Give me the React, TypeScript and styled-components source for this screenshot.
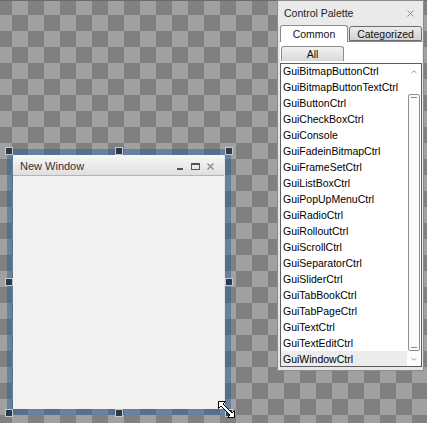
import React from "react";
import styled, { createGlobalStyle } from "styled-components";

const Global = createGlobalStyle`
  html, body { margin: 0; padding: 0; background: #808080; }
  body { font-family: "Liberation Sans", Arial, sans-serif; }
  * { box-sizing: border-box; }
`;

const Canvas = styled.div`
  position: relative;
  width: 427px;
  height: 423px;
  overflow: hidden;
  background: repeating-conic-gradient(#808080 0 25%, #a0a0a0 0 50%);
  background-size: 32px 32px;
  background-position: 12px -1px;
  box-shadow: inset 0 1px 0 #6a6a6a;
`;

/* ---------- selected window on the canvas ---------- */

const SelectionFrame = styled.div`
  position: absolute;
  left: 7px;
  top: 149px;
  width: 224px;
  height: 266px;
  padding: 6px;
  background: rgba(36, 92, 158, 0.45);
  display: flex;
`;

const Handle = styled.div<{ $x: string; $y: string }>`
  position: absolute;
  left: ${(p) => p.$x};
  top: ${(p) => p.$y};
  width: 8px;
  height: 8px;
  background: #2e3947;
  border: 1px solid #c3c9d0;
  z-index: 2;
`;

const Window = styled.div`
  flex: 1;
  display: flex;
  flex-direction: column;
  background: #f2f1ef;
  border-right: 1px solid #e4e4e4;
`;

const TitleBar = styled.div`
  height: 21px;
  flex: none;
  display: flex;
  align-items: center;
  padding: 0 10px 0 7px;
  background: linear-gradient(#f8f8f8, #dfdfdf);
  border-bottom: 1px solid #b4b4b4;
`;

const Title = styled.span`
  flex: 1;
  font-size: 11px;
  color: #333;
  padding-top: 1px;
`;

const TitleButtons = styled.div`
  display: flex;
  align-items: center;
  gap: 7px;
  padding-top: 2px;
`;

const Body = styled.div`
  flex: 1;
`;

const ResizeCursor = styled.svg`
  position: absolute;
  left: 217px;
  top: 400px;
  z-index: 3;
`;

/* ---------- control palette ---------- */

const Palette = styled.div`
  position: absolute;
  left: 277px;
  top: 0;
  width: 147px;
  height: 371px;
  border: 1px solid #8c8c8c;
  background: #e6e6e6;
  display: flex;
  flex-direction: column;
  padding: 0 1px 3px 2px;
  font-size: 10.5px;
  color: #000;
`;

const PaletteHeader = styled.div`
  height: 24px;
  flex: none;
  display: flex;
  align-items: center;
  justify-content: space-between;
  margin: 0 -1px 0 -2px;
  padding: 0 9px 0 6px;
  color: #222;
  background: #eaeaea;
`;

const TabRow = styled.div`
  height: 16px;
  flex: none;
  display: flex;
  align-items: flex-end;
  gap: 1px;
  position: relative;
  z-index: 1;
`;

const Tab = styled.div<{ $active?: boolean; $w: number }>`
  width: ${(p) => p.$w}px;
  height: ${(p) => (p.$active ? 17 : 15)}px;
  margin-bottom: ${(p) => (p.$active ? -1 : 0)}px;
  display: flex;
  align-items: ${(p) => (p.$active ? "center" : "flex-start")};
  justify-content: center;
  padding-top: ${(p) => (p.$active ? 0 : 1)}px;
  border: 1px solid ${(p) => (p.$active ? "#8a8a8a" : "#6f6f6f")};
  border-bottom: ${(p) => (p.$active ? "none" : "1px solid #6f6f6f")};
  border-radius: 3px 3px 0 0;
  background: ${(p) => (p.$active ? "#ffffff" : "linear-gradient(#ececec, #d2d2d2)")};
  color: #111;
`;

const TabBody = styled.div`
  flex: 1;
  display: flex;
  flex-direction: column;
  align-items: flex-start;
  background: #ffffff;
  border-top: 1px solid #8a8a8a;
  min-height: 0;
`;

const AllButton = styled.div`
  width: 63px;
  height: 15px;
  margin: 4px 0 2px 1px;
  display: flex;
  align-items: center;
  justify-content: center;
  border: 1px solid #8e8e8e;
  border-bottom: none;
  border-radius: 3px 3px 0 0;
  background: linear-gradient(#f2f2f2, #d8d8d8);
  color: #111;
`;

const ListBox = styled.div`
  align-self: stretch;
  flex: 1;
  display: flex;
  border: 1px solid #5e5e5e;
  background: #fff;
  min-height: 0;
  overflow: hidden;
`;

const Items = styled.div`
  flex: 1;
  overflow: hidden;
  display: flex;
  flex-direction: column;
  margin-top: -1px;
`;

const Item = styled.div<{ $selected?: boolean }>`
  height: 16px;
  flex: none;
  line-height: 16px;
  padding-left: 2px;
  white-space: nowrap;
  background: ${(p) => (p.$selected ? "#ececec" : "transparent")};
`;

const ScrollBar = styled.div`
  width: 14px;
  flex: none;
  display: flex;
  flex-direction: column;
  align-items: center;
  background: #fff;
`;

const Arrow = styled.div<{ $h: number }>`
  height: ${(p) => p.$h}px;
  flex: none;
  display: flex;
  align-items: center;
  justify-content: center;
`;

const Track = styled.div`
  flex: 1;
  width: 100%;
  display: flex;
  flex-direction: column;
  padding: 14px 1px 0 1px;
`;

const Thumb = styled.div`
  flex: 1;
  border: 1px solid #8e8e8e;
  border-radius: 2px;
  background: #fbfbfb;
  display: flex;
  flex-direction: column;
  justify-content: space-between;
  align-items: center;
  padding: 2px 0;
`;

const Grip = styled.div`
  width: 6px;
  height: 1px;
  background: #8a8a8a;
`;

const items = [
  "GuiBitmapButtonCtrl",
  "GuiBitmapButtonTextCtrl",
  "GuiButtonCtrl",
  "GuiCheckBoxCtrl",
  "GuiConsole",
  "GuiFadeinBitmapCtrl",
  "GuiFrameSetCtrl",
  "GuiListBoxCtrl",
  "GuiPopUpMenuCtrl",
  "GuiRadioCtrl",
  "GuiRolloutCtrl",
  "GuiScrollCtrl",
  "GuiSeparatorCtrl",
  "GuiSliderCtrl",
  "GuiTabBookCtrl",
  "GuiTabPageCtrl",
  "GuiTextCtrl",
  "GuiTextEditCtrl",
  "GuiWindowCtrl",
];

const handles: [string, string][] = [
  ["-2px", "-2px"],
  ["calc(50% - 4px)", "-2px"],
  ["calc(100% - 6px)", "-2px"],
  ["-2px", "calc(50% - 4px)"],
  ["calc(100% - 6px)", "calc(50% - 4px)"],
  ["-2px", "calc(100% - 6px)"],
  ["calc(50% - 4px)", "calc(100% - 6px)"],
  ["calc(100% - 6px)", "calc(100% - 6px)"],
];

export default function App() {
  return (
    <>
      <Global />
      <Canvas>
        <SelectionFrame>
          {handles.map(([x, y], i) => (
            <Handle key={i} $x={x} $y={y} />
          ))}
          <Window>
            <TitleBar>
              <Title>New Window</Title>
              <TitleButtons>
                <svg width="7" height="7" viewBox="0 0 7 7">
                  <rect x="0" y="5" width="6" height="2" fill="#555" />
                </svg>
                <svg width="9" height="7" viewBox="0 0 9 7">
                  <rect x="0.5" y="0.5" width="8" height="6" fill="none" stroke="#555" />
                  <rect x="0" y="0" width="9" height="2" fill="#555" />
                </svg>
                <svg width="7" height="7" viewBox="0 0 7 7">
                  <path d="M0.5 0.5 L6.5 6.5 M6.5 0.5 L0.5 6.5" stroke="#8a8a8a" strokeWidth="1.3" />
                </svg>
              </TitleButtons>
            </TitleBar>
            <Body />
          </Window>
        </SelectionFrame>
        <ResizeCursor width="19" height="19" viewBox="0 0 19 19">
          <polygon
            points="1.5,1.5 8.5,1.5 6,4 15,13 17.5,10.5 17.5,17.5 10.5,17.5 13,15 4,6 1.5,8.5"
            fill="#fff"
            stroke="#000"
            strokeWidth="1"
            strokeLinejoin="miter"
          />
        </ResizeCursor>

        <Palette>
          <PaletteHeader>
            <span>Control Palette</span>
            <svg width="7" height="7" viewBox="0 0 7 7">
              <path d="M0.5 0.5 L6.5 6.5 M6.5 0.5 L0.5 6.5" stroke="#909090" strokeWidth="1" />
            </svg>
          </PaletteHeader>
          <TabRow>
            <Tab $active $w={68}>Common</Tab>
            <Tab $w={73}>Categorized</Tab>
          </TabRow>
          <TabBody>
            <AllButton>All</AllButton>
            <ListBox>
              <Items>
                {items.map((t) => (
                  <Item key={t} $selected={t === "GuiWindowCtrl"}>
                    {t}
                  </Item>
                ))}
              </Items>
              <ScrollBar>
                <Arrow $h={16}>
                  <svg width="6" height="4" viewBox="0 0 6 4">
                    <polyline points="0.5,3 3,0.8 5.5,3" fill="none" stroke="#9a9a9a" strokeWidth="1" />
                  </svg>
                </Arrow>
                <Track>
                  <Thumb>
                    <Grip />
                    <Grip />
                  </Thumb>
                </Track>
                <Arrow $h={15}>
                  <svg width="6" height="4" viewBox="0 0 6 4">
                    <polyline points="0.5,1 3,3.2 5.5,1" fill="none" stroke="#9a9a9a" strokeWidth="1" />
                  </svg>
                </Arrow>
              </ScrollBar>
            </ListBox>
          </TabBody>
        </Palette>
      </Canvas>
    </>
  );
}
